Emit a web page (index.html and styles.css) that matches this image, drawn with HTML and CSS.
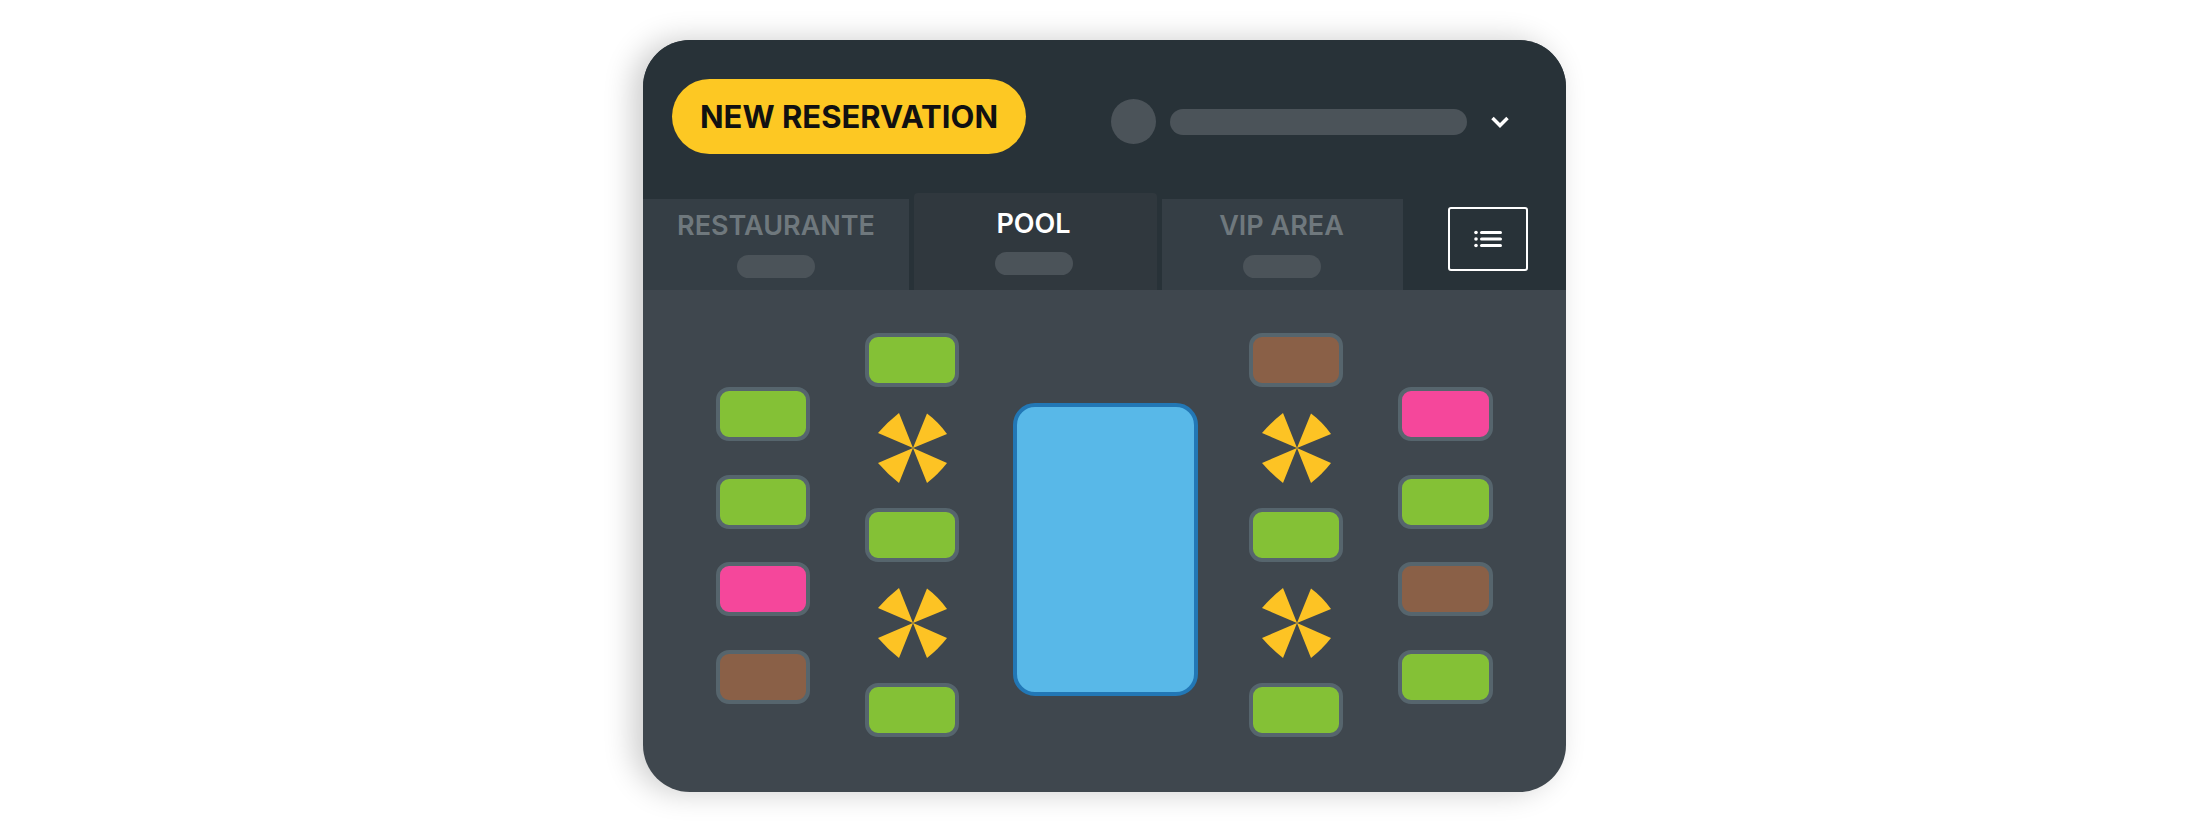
FILE: index.html
```html
<!DOCTYPE html>
<html lang="en">

<head>
    <meta charset="UTF-8">
    <title>Reservations</title>
    <link rel="stylesheet" href="styles.css">
</head>

<body>
    <svg class="defs" width="0" height="0">
        <symbol id="umbrella" viewBox="0 0 70 70">
            <path d="M35 35 L0 20 Q9.500 9 21 0 Z" />
            <path d="M35 35 L49 0.5 Q60.500 9 69 21 Z" />
            <path d="M35 35 L0 50 Q9.500 61 21 70 Z" />
            <path d="M35 35 L69 50 Q60.500 61 49 70 Z" />
        </symbol>
    </svg>

    <div class="card">
        <div class="header">
            <div class="top">
                <a href="#" class="new-btn">NEW RESERVATION</a>
                <div class="account">
                    <span class="avatar"></span>
                    <span class="name-bar"></span>
                    <svg class="chevron" width="18" height="12" viewBox="0 0 18 12">
                        <path d="M1.5 2 L9 9.5 L16.5 2" />
                    </svg>
                </div>
            </div>
            <div class="tabs">
                <div class="tab tab-first">
                    <span class="tab-label">RESTAURANTE</span>
                    <span class="tab-pill"></span>
                </div>
                <div class="tab tab-active">
                    <span class="tab-label">POOL</span>
                    <span class="tab-pill"></span>
                </div>
                <div class="tab tab-last">
                    <span class="tab-label">VIP AREA</span>
                    <span class="tab-pill"></span>
                </div>
                <a href="#" class="list-btn">
                    <svg width="28" height="18" viewBox="0 0 28 18">
                        <circle cx="2" cy="2.5" r="1.8" />
                        <circle cx="2" cy="9" r="1.8" />
                        <circle cx="2" cy="15.500" r="1.8" />
                        <rect x="6" y="1" width="22" height="3" rx="1.5" />
                        <rect x="6" y="7.5" width="22" height="3" rx="1.5" />
                        <rect x="6" y="14" width="22" height="3" rx="1.5" />
                    </svg>
                </a>
            </div>
        </div>

        <div class="floor">
            <div class="col col-loungers col-a">
                <div class="table green"></div>
                <div class="table green"></div>
                <div class="table pink"></div>
                <div class="table brown"></div>
            </div>
            <div class="col col-umbrellas col-b">
                <div class="table green"></div>
                <svg class="umbrella"><use href="#umbrella" /></svg>
                <div class="table green"></div>
                <svg class="umbrella"><use href="#umbrella" /></svg>
                <div class="table green"></div>
            </div>
            <div class="pool"></div>
            <div class="col col-umbrellas col-c">
                <div class="table brown"></div>
                <svg class="umbrella"><use href="#umbrella" /></svg>
                <div class="table green"></div>
                <svg class="umbrella"><use href="#umbrella" /></svg>
                <div class="table green"></div>
            </div>
            <div class="col col-loungers col-d">
                <div class="table pink"></div>
                <div class="table green"></div>
                <div class="table brown"></div>
                <div class="table green"></div>
            </div>
        </div>
    </div>
</body>

</html>
```

FILE: styles.css
```css
html {
    height: 100%;
    overflow: hidden;
}

body {
    box-sizing: border-box;
    height: 100%;
    margin: 0;
    padding-top: 40px;
    background: #fff;
    font-family: "Inter", "Liberation Sans", sans-serif;
}

.defs {
    display: block;
    height: 0;
}

.card {
    width: 923px;
    height: 752px;
    margin-left: 643px;
    border-radius: 47px;
    overflow: hidden;
    background: #3f474e;
    box-shadow: -10px 0 30px rgba(0, 0, 0, .2);
}

.header {
    height: 250px;
    background: #283238;
}

.top {
    display: flex;
    align-items: flex-start;
    padding: 39px 0 0 29px;
}

.new-btn {
    display: flex;
    align-items: center;
    justify-content: center;
    width: 354px;
    height: 75px;
    border-radius: 38px;
    background: #fdc823;
    color: #111;
    font-size: 31px;
    font-weight: 700;
    text-decoration: none;
}

.account {
    display: flex;
    align-items: center;
    margin: 20px 0 0 85px;
}

.avatar {
    width: 45px;
    height: 45px;
    border-radius: 50%;
    background: #4b5359;
}

.name-bar {
    width: 297px;
    height: 26px;
    margin-left: 14px;
    border-radius: 13px;
    background: #4b5359;
}

.chevron {
    margin-left: 24px;
    fill: none;
    stroke: #fff;
    stroke-width: 3.5;
}

.tabs {
    display: flex;
    align-items: flex-end;
    gap: 5px;
    margin-top: 39px;
    height: 97px;
}

.tab {
    display: flex;
    flex-direction: column;
    align-items: center;
    height: 91px;
    padding-top: 12px;
    box-sizing: border-box;
    background: #353e45;
}

.tab-first {
    width: 266px;
}

.tab-active {
    width: 243px;
    height: 97px;
    padding: 16px 4px 0 0;
    border-radius: 4px 4px 0 0;
    background: #30383e;
}

.tab-last {
    width: 241px;
    padding-right: 2px;
}

.tab-label {
    height: 30px;
    line-height: 30px;
    font-size: 27px;
    font-weight: 600;
    color: #6f787d;
}

.tab-active .tab-label {
    color: #fff;
}

.tab-pill {
    width: 78px;
    height: 23px;
    margin-top: 14px;
    border-radius: 12px;
    background: #4b5359;
}

.tab-active .tab-pill {
    margin-top: 13px;
}

.list-btn {
    display: flex;
    align-items: center;
    justify-content: center;
    align-self: flex-start;
    width: 80px;
    height: 64px;
    margin: 14px 0 0 40px;
    padding-bottom: 1px;
    box-sizing: border-box;
    border: 2px solid #fff;
    border-radius: 3px;
    fill: #fff;
}

.floor {
    display: flex;
    align-items: flex-start;
    height: 502px;
    padding-left: 73px;
}

.col {
    display: flex;
    flex-direction: column;
    width: 94px;
}

.col-loungers {
    gap: 33.5px;
    padding-top: 97px;
}

.col-umbrellas {
    gap: 25.5px;
    padding-top: 43px;
    align-items: center;
}

.col-umbrellas .umbrella {
    margin-left: 2px;
}

.col-b {
    margin-left: 55px;
}

.col-c {
    margin-left: 51px;
}

.col-d {
    margin-left: 55px;
}

.col-d .table {
    width: 95px;
}

.table {
    box-sizing: border-box;
    width: 94px;
    height: 54px;
    border: 4.5px solid #56656d;
    border-radius: 13px;
}

.green {
    background: #84c136;
}

.pink {
    background: #f5479b;
}

.brown {
    background: #8a6047;
}

.umbrella {
    width: 70px;
    height: 70px;
    fill: #fdc324;
}

.pool {
    box-sizing: border-box;
    width: 185px;
    height: 293px;
    margin: 113px 0 0 54px;
    border: 4px solid #2277b5;
    border-radius: 22px;
    background: #58b8e8;
}
```
